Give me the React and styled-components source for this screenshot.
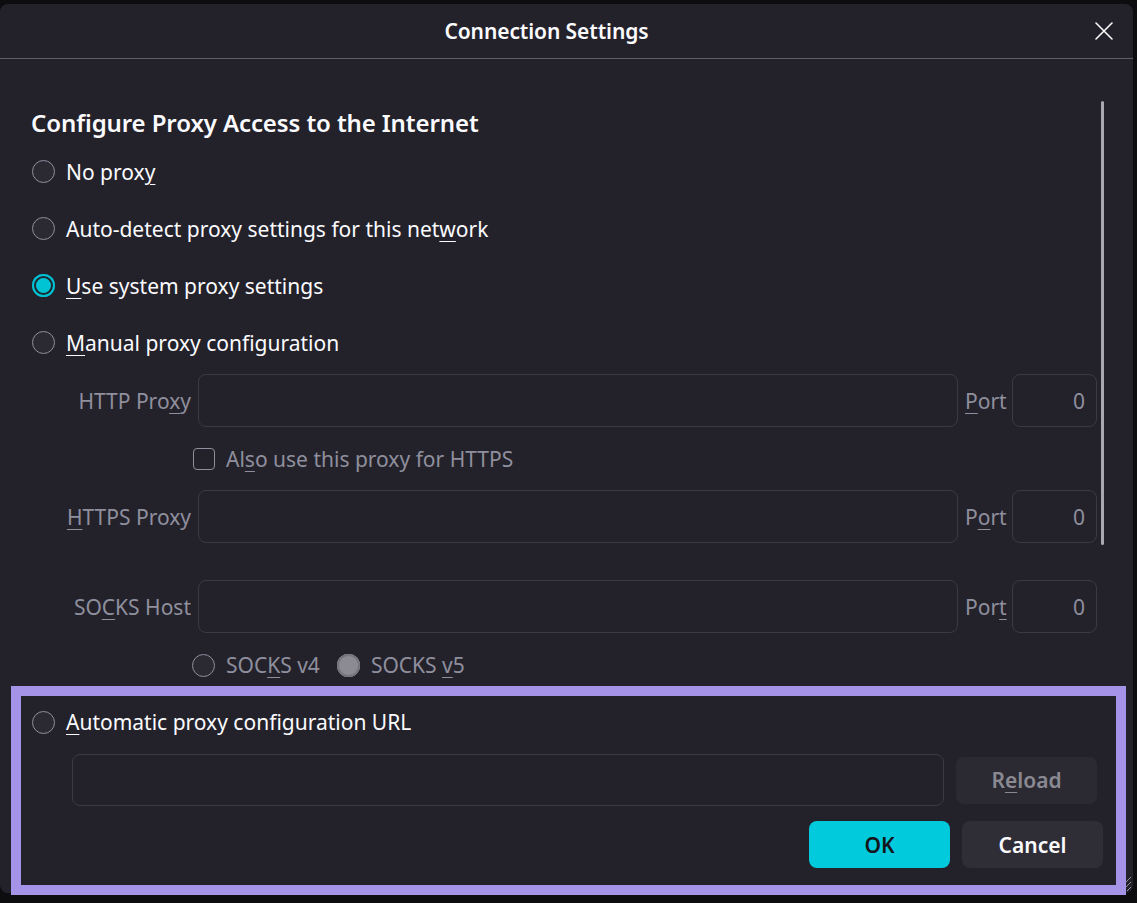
import React from 'react'
import styled, { createGlobalStyle, css } from "styled-components";

const GlobalStyle = createGlobalStyle`
    html, body {
        margin: 0;
        padding: 0;
        background: #0d0d10;
    }
    body {
        font-family: "Noto Sans", "Open Sans", sans-serif;
        color: #fbfbfe;
    }
`;

const Screen = styled.div`
    position: relative;
    height: 903px;
    padding-top: 4px;
    box-sizing: border-box;
    overflow: hidden;
`;

const Dialog = styled.div`
    position: relative;
    width: 1133px;
    height: 889px;
    background: #23222b;
    border-radius: 8px;
    display: flex;
    flex-direction: column;
`;

const TitleBar = styled.header`
    height: 54px;
    border-bottom: 1px solid #5f5e68;
    display: grid;
    grid-template-columns: 1fr auto 1fr;
    align-items: center;
`;

const Title = styled.h1`
    grid-column: 2;
    margin: 0 40px 0 0;
    font-size: 21px;
    font-weight: 600;
    letter-spacing: -0.1px;
`;

const CloseButton = styled.button`
    justify-self: end;
    margin-right: 16px;
    width: 26px;
    height: 26px;
    padding: 0;
    border: none;
    background: none;
    color: #fbfbfe;
    display: flex;
    align-items: center;
    justify-content: center;
`;

const Content = styled.div`
    padding: 48px 36px 0 31px;
    display: flex;
    flex-direction: column;
`;

const Heading = styled.h2`
    margin: 0 0 6px;
    height: 30px;
    display: flex;
    align-items: center;
    font-size: 24px;
    font-weight: 600;
    letter-spacing: -0.1px;
`;

const OptionRow = styled.label`
    height: ${({ $h }) => $h || 57}px;
    display: flex;
    align-items: center;
    gap: 11px;
    padding-left: ${({ $indent }) => $indent || 1}px;
    font-size: 21px;
    color: ${({ $disabled }) => $disabled ? "#8f8f9d" : "#fbfbfe"};
`;

const Radio = styled.span`
    flex: none;
    width: 23px;
    height: 23px;
    box-sizing: border-box;
    border-radius: 50%;
    border: 1px solid #8f8f9d;
    background: #2b2a33;
    ${({ $checked }) => $checked && css`
        border: none;
        background: #00c3d4;
        box-shadow: inset 0 0 0 2px #00c3d4, inset 0 0 0 4px #1c2a33;
    `}
    ${({ $checked, $disabled }) => $checked && $disabled && css`
        background: #8c8b94;
        box-shadow: inset 0 0 0 2px #76757e, inset 0 0 0 3px #8c8b94;
    `}
    margin-left: ${({ $gap }) => $gap || 0}px;
`;

const Checkbox = styled.span`
    flex: none;
    width: 22px;
    height: 22px;
    box-sizing: border-box;
    border: 1px solid #8f8f9d;
    border-radius: 4px;
    background: #23222b;
`;

const Key = styled.u`
    text-decoration-thickness: 1px;
    text-underline-offset: 4px;
`;

const FieldGrid = styled.div`
    display: grid;
    grid-template-columns: 160px 1fr 40px 85px;
    column-gap: 7px;
    align-items: center;
    height: 53px;
    margin-top: ${({ $mt }) => $mt || 0}px;
`;

const FieldLabel = styled.span`
    text-align: right;
    font-size: 21px;
    color: #8f8f9d;
    white-space: nowrap;
`;

const PortLabel = styled(FieldLabel)`
    text-align: left;
`;

const TextBox = styled.div`
    height: ${({ $h }) => $h || 53}px;
    box-sizing: border-box;
    border: 1px solid #3b3a44;
    border-radius: 8px;
    padding: 0 11px;
    display: flex;
    align-items: center;
    justify-content: flex-end;
    font-size: 21px;
    color: #8f8f9d;
    flex: ${({ $grow }) => $grow ? 1 : "none"};
`;

const UrlRow = styled.div`
    margin-top: 7px;
    padding-left: 41px;
    display: flex;
    align-items: center;
    gap: 12px;
`;

const Button = styled.button`
    width: 141px;
    height: 47px;
    border: none;
    border-radius: 8px;
    font-family: inherit;
    font-size: 21px;
    font-weight: 600;
    color: #fbfbfe;
    background: #2f2e37;
    ${({ $primary }) => $primary && css`
        background: #00cadb;
        color: #15141a;
    `}
    ${({ disabled }) => disabled && css`
        background: #2b2a33;
        color: #8a8992;
    `}
`;

const Footer = styled.div`
    margin-top: 15px;
    margin-right: -6px;
    display: flex;
    justify-content: flex-end;
    gap: 12px;
`;

const ScrollThumb = styled.div`
    position: absolute;
    left: 1101px;
    top: 97px;
    width: 3px;
    height: 444px;
    border-radius: 2px;
    background: #a8a8b0;
`;

const Grip = styled.svg`
    position: absolute;
    right: 0;
    bottom: 0;
`;

const Highlight = styled.div`
    position: absolute;
    left: 11px;
    top: 686px;
    width: 1115px;
    height: 209px;
    box-sizing: border-box;
    border: 10px solid #a493e6;
    pointer-events: none;
`;

const App = () => {
    return (
        <Screen>
            <GlobalStyle />
            <Dialog>
                <TitleBar>
                    <Title>Connection Settings</Title>
                    <CloseButton aria-label="Close">
                        <svg width="20" height="20" viewBox="0 0 20 20">
                            <path d="M2 2 L18 18 M18 2 L2 18" stroke="currentColor" strokeWidth="1.6" strokeLinecap="round" />
                        </svg>
                    </CloseButton>
                </TitleBar>

                <Content>
                    <Heading>Configure Proxy Access to the Internet</Heading>
                    <OptionRow>
                        <Radio />
                        <span>No prox<Key>y</Key></span>
                    </OptionRow>
                    <OptionRow>
                        <Radio />
                        <span>Auto-detect proxy settings for this net<Key>w</Key>ork</span>
                    </OptionRow>
                    <OptionRow>
                        <Radio $checked />
                        <span><Key>U</Key>se system proxy settings</span>
                    </OptionRow>
                    <OptionRow>
                        <Radio />
                        <span><Key>M</Key>anual proxy configuration</span>
                    </OptionRow>

                    <FieldGrid $mt={3}>
                        <FieldLabel>HTTP Pro<Key>x</Key>y</FieldLabel>
                        <TextBox />
                        <PortLabel><Key>P</Key>ort</PortLabel>
                        <TextBox>0</TextBox>
                    </FieldGrid>
                    <OptionRow $h={63} $indent={162} $disabled>
                        <Checkbox />
                        <span>Al<Key>s</Key>o use this proxy for HTTPS</span>
                    </OptionRow>
                    <FieldGrid>
                        <FieldLabel><Key>H</Key>TTPS Proxy</FieldLabel>
                        <TextBox />
                        <PortLabel>P<Key>o</Key>rt</PortLabel>
                        <TextBox>0</TextBox>
                    </FieldGrid>
                    <FieldGrid $mt={37}>
                        <FieldLabel>SO<Key>C</Key>KS Host</FieldLabel>
                        <TextBox />
                        <PortLabel>Por<Key>t</Key></PortLabel>
                        <TextBox>0</TextBox>
                    </FieldGrid>
                    <OptionRow $h={64} $indent={161} $disabled>
                        <Radio />
                        <span>SOC<Key>K</Key>S v4</span>
                        <Radio $checked $disabled $gap={6} />
                        <span>SOCKS <Key>v</Key>5</span>
                    </OptionRow>

                    <OptionRow $h={50}>
                        <Radio />
                        <span><Key>A</Key>utomatic proxy configuration URL</span>
                    </OptionRow>
                    <UrlRow>
                        <TextBox $h={52} $grow />
                        <Button disabled>R<Key>e</Key>load</Button>
                    </UrlRow>
                    <Footer>
                        <Button $primary>OK</Button>
                        <Button>Cancel</Button>
                    </Footer>
                </Content>

                <ScrollThumb />
                <Grip width="22" height="20" viewBox="0 0 22 20">
                    <path d="M20 4 L6 18 M20 9 L11 18 M20 14 L16 18" stroke="#8f8f9d" strokeWidth="1" />
                </Grip>
            </Dialog>
            <Highlight />
        </Screen>
    );
}

export default App;
